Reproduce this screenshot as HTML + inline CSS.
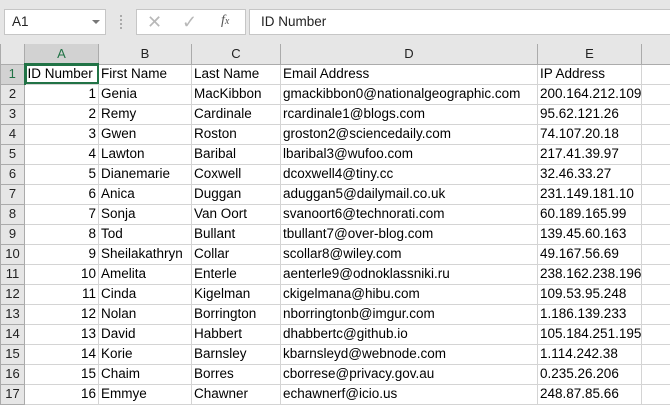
<!DOCTYPE html>
<html><head><style>
*{margin:0;padding:0;box-sizing:border-box}
body{width:670px;height:400px;overflow:hidden;background:#fff;font-family:"Liberation Sans",sans-serif;font-size:13.5px;color:#000;position:relative}
.tb{position:absolute;left:0;top:0;width:670px;height:45px;background:#e6e6e6}
.box{position:absolute;top:9px;height:26px;background:#fff;border:1px solid #c6c6c6}
table{position:absolute;left:0;top:44px;border-collapse:collapse;table-layout:fixed;width:682px}
td{height:20px;border:1px solid #d4d4d4;padding:0 2px;white-space:nowrap;overflow:hidden;line-height:18px}
tr.h td{height:20px;background:#e6e6e6;text-align:center;border-color:#ababab;border-top:none;color:#222;font-size:13px}
td.r{background:#e6e6e6;text-align:center;border-color:#ababab;color:#222;padding:0;font-size:13px}
td.n{text-align:right}
</style></head><body>
<div class="tb">
<div class="box" style="left:4px;width:102px"><span style="position:absolute;left:7px;top:4px;color:#222">A1</span><span style="position:absolute;left:87px;top:10px;border-left:4px solid transparent;border-right:4px solid transparent;border-top:4px solid #777"></span></div>
<div style="position:absolute;left:120px;top:15px;width:2px;height:14px;border-left:2px dotted #aaa"></div>
<div class="box" style="left:136px;width:110px"><span style="position:absolute;left:10px;top:2px;color:#b8b8b8;font-size:18px">✕</span><span style="position:absolute;left:45px;top:2px;color:#b8b8b8;font-size:18px">✓</span><span style="position:absolute;left:84px;top:3px;color:#555;font-style:italic;font-family:'Liberation Serif',serif;font-size:14px">f<span style="font-size:10px">x</span></span></div>
<div class="box" style="left:249px;width:425px"><span style="position:absolute;left:11px;top:4px;color:#222">ID Number</span></div>
</div>
<table>
<colgroup><col style="width:24px"><col style="width:74px"><col style="width:93px"><col style="width:89px"><col style="width:257px"><col style="width:104px"><col style="width:41px"></colgroup>
<tr class="h"><td style="background:#e6e6e6"></td><td style="background:#d2d2d2;border-bottom:2px solid #217346;color:#217346">A</td><td>B</td><td>C</td><td>D</td><td>E</td><td style="border-right:none"></td></tr>
<tr><td class="r" style="background:#d2d2d2;border-right:2px solid #217346;color:#217346">1</td><td style="outline:2px solid #217346;outline-offset:-2px">ID Number</td><td>First Name</td><td>Last Name</td><td>Email Address</td><td>IP Address</td><td></td></tr>
<tr><td class="r">2</td><td class="n">1</td><td>Genia</td><td>MacKibbon</td><td>gmackibbon0@nationalgeographic.com</td><td>200.164.212.109</td><td></td></tr>
<tr><td class="r">3</td><td class="n">2</td><td>Remy</td><td>Cardinale</td><td>rcardinale1@blogs.com</td><td>95.62.121.26</td><td></td></tr>
<tr><td class="r">4</td><td class="n">3</td><td>Gwen</td><td>Roston</td><td>groston2@sciencedaily.com</td><td>74.107.20.18</td><td></td></tr>
<tr><td class="r">5</td><td class="n">4</td><td>Lawton</td><td>Baribal</td><td>lbaribal3@wufoo.com</td><td>217.41.39.97</td><td></td></tr>
<tr><td class="r">6</td><td class="n">5</td><td>Dianemarie</td><td>Coxwell</td><td>dcoxwell4@tiny.cc</td><td>32.46.33.27</td><td></td></tr>
<tr><td class="r">7</td><td class="n">6</td><td>Anica</td><td>Duggan</td><td>aduggan5@dailymail.co.uk</td><td>231.149.181.10</td><td></td></tr>
<tr><td class="r">8</td><td class="n">7</td><td>Sonja</td><td>Van Oort</td><td>svanoort6@technorati.com</td><td>60.189.165.99</td><td></td></tr>
<tr><td class="r">9</td><td class="n">8</td><td>Tod</td><td>Bullant</td><td>tbullant7@over-blog.com</td><td>139.45.60.163</td><td></td></tr>
<tr><td class="r">10</td><td class="n">9</td><td>Sheilakathryn</td><td>Collar</td><td>scollar8@wiley.com</td><td>49.167.56.69</td><td></td></tr>
<tr><td class="r">11</td><td class="n">10</td><td>Amelita</td><td>Enterle</td><td>aenterle9@odnoklassniki.ru</td><td>238.162.238.196</td><td></td></tr>
<tr><td class="r">12</td><td class="n">11</td><td>Cinda</td><td>Kigelman</td><td>ckigelmana@hibu.com</td><td>109.53.95.248</td><td></td></tr>
<tr><td class="r">13</td><td class="n">12</td><td>Nolan</td><td>Borrington</td><td>nborringtonb@imgur.com</td><td>1.186.139.233</td><td></td></tr>
<tr><td class="r">14</td><td class="n">13</td><td>David</td><td>Habbert</td><td>dhabbertc@github.io</td><td>105.184.251.195</td><td></td></tr>
<tr><td class="r">15</td><td class="n">14</td><td>Korie</td><td>Barnsley</td><td>kbarnsleyd@webnode.com</td><td>1.114.242.38</td><td></td></tr>
<tr><td class="r">16</td><td class="n">15</td><td>Chaim</td><td>Borres</td><td>cborrese@privacy.gov.au</td><td>0.235.26.206</td><td></td></tr>
<tr><td class="r">17</td><td class="n">16</td><td>Emmye</td><td>Chawner</td><td>echawnerf@icio.us</td><td>248.87.85.66</td><td></td></tr>
</table>
</body></html>
